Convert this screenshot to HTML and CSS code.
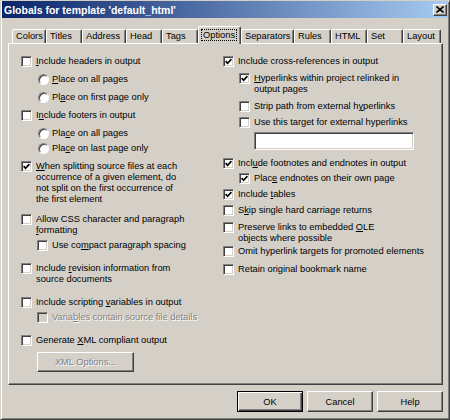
FILE: index.html
```html
<!DOCTYPE html>
<html lang="en">
<head>
    <meta charset="UTF-8">
    <title>Globals for template 'default_html'</title>
    <link rel="stylesheet" href="styles.css">
</head>
<body>

    <div class="window">
        <!-- Title Bar -->
        <div class="title-bar">
            <span class="title">Globals for template 'default_html'</span>
            <span class="close-btn">
                <svg width="8" height="7" viewBox="0 0 8 7"><path d="M0.5 0.5 L7.5 6.5 M7.5 0.5 L0.5 6.5" stroke="#000" stroke-width="1.6"/></svg>
            </span>
        </div>

        <!-- Tab Strip -->
        <div class="tabs">
            <div class="tab">Colors</div>
            <div class="tab">Titles</div>
            <div class="tab">Address</div>
            <div class="tab">Head</div>
            <div class="tab">Tags</div>
            <div class="tab selected"><span class="focus">Options</span></div>
            <div class="tab">Separators</div>
            <div class="tab">Rules</div>
            <div class="tab">HTML</div>
            <div class="tab">Set</div>
            <div class="tab">Layout</div>
        </div>

        <!-- Options Panel -->
        <div class="panel">
            <div class="col col-left">
                <div class="row first">
                    <span class="box"></span>
                    <span class="text"><u>I</u>nclude headers in output</span>
                </div>
                <div class="row sub">
                    <span class="radio"></span>
                    <span class="text"><u>P</u>lace on all pages</span>
                </div>
                <div class="row sub">
                    <span class="radio"></span>
                    <span class="text">Pl<u>a</u>ce on first page only</span>
                </div>
                <div class="row">
                    <span class="box"></span>
                    <span class="text">I<u>n</u>clude footers in output</span>
                </div>
                <div class="row sub">
                    <span class="radio"></span>
                    <span class="text">Pla<u>c</u>e on all pages</span>
                </div>
                <div class="row sub tight">
                    <span class="radio"></span>
                    <span class="text">Pla<u>c</u>e on last page only</span>
                </div>
                <div class="row">
                    <span class="box checked"><svg width="7" height="7" viewBox="0 0 7 7"><path d="M0.6 3.2 L2.6 5.3 L6.4 1.2" fill="none" stroke="#000" stroke-width="1.7"/></svg></span>
                    <span class="text"><u>W</u>hen splitting source files at each<br>occurrence of a given element, do<br>not split on the first occurrence of<br>the first element</span>
                </div>
                <div class="row mid">
                    <span class="box"></span>
                    <span class="text">Allow CSS character and paragraph<br><u>f</u>ormatting</span>
                </div>
                <div class="row sub tight">
                    <span class="box"></span>
                    <span class="text">Use co<u>m</u>pact paragraph spacing</span>
                </div>
                <div class="row loose">
                    <span class="box"></span>
                    <span class="text">Include <u>r</u>evision information from<br>source documents</span>
                </div>
                <div class="row loose">
                    <span class="box"></span>
                    <span class="text">Include scripting <u>v</u>ariables in output</span>
                </div>
                <div class="row sub tight disabled">
                    <span class="box"></span>
                    <span class="text">Varia<u>b</u>les contain source file details</span>
                </div>
                <div class="row loose">
                    <span class="box"></span>
                    <span class="text">Generate <u>X</u>ML compliant output</span>
                </div>
                <button class="btn btn-disabled xml-btn">XML Options...</button>
            </div>

            <div class="col col-right">
                <div class="row first">
                    <span class="box checked"><svg width="7" height="7" viewBox="0 0 7 7"><path d="M0.6 3.2 L2.6 5.3 L6.4 1.2" fill="none" stroke="#000" stroke-width="1.7"/></svg></span>
                    <span class="text">Include cross-references in output</span>
                </div>
                <div class="row sub wide">
                    <span class="box checked"><svg width="7" height="7" viewBox="0 0 7 7"><path d="M0.6 3.2 L2.6 5.3 L6.4 1.2" fill="none" stroke="#000" stroke-width="1.7"/></svg></span>
                    <span class="text"><u>H</u>yperlinks within project relinked in<br>output pages</span>
                </div>
                <div class="row sub wide">
                    <span class="box"></span>
                    <span class="text">Strip path from external h<u>y</u>perlinks</span>
                </div>
                <div class="row sub">
                    <span class="box"></span>
                    <span class="text">Use this target for external hyperlinks</span>
                </div>
                <div class="target-input"></div>
                <div class="row">
                    <span class="box checked"><svg width="7" height="7" viewBox="0 0 7 7"><path d="M0.6 3.2 L2.6 5.3 L6.4 1.2" fill="none" stroke="#000" stroke-width="1.7"/></svg></span>
                    <span class="text">Incl<u>u</u>de footnotes and endnotes in output</span>
                </div>
                <div class="row sub tight">
                    <span class="box checked"><svg width="7" height="7" viewBox="0 0 7 7"><path d="M0.6 3.2 L2.6 5.3 L6.4 1.2" fill="none" stroke="#000" stroke-width="1.7"/></svg></span>
                    <span class="text">Plac<u>e</u> endnotes on their own page</span>
                </div>
                <div class="row">
                    <span class="box checked"><svg width="7" height="7" viewBox="0 0 7 7"><path d="M0.6 3.2 L2.6 5.3 L6.4 1.2" fill="none" stroke="#000" stroke-width="1.7"/></svg></span>
                    <span class="text">Include <u>t</u>ables</span>
                </div>
                <div class="row">
                    <span class="box"></span>
                    <span class="text">S<u>k</u>ip single hard carriage returns</span>
                </div>
                <div class="row wide">
                    <span class="box"></span>
                    <span class="text">Preserve links to embedded <u>O</u>LE<br>objects where possible</span>
                </div>
                <div class="row snug">
                    <span class="box"></span>
                    <span class="text">Omit hyperlink targets for promoted elements</span>
                </div>
                <div class="row spaced">
                    <span class="box"></span>
                    <span class="text">Retain original bookmark name</span>
                </div>
            </div>
        </div>

        <!-- Dialog Buttons -->
        <div class="buttons">
            <button class="btn btn-default">OK</button>
            <button class="btn">Cancel</button>
            <button class="btn">Help</button>
        </div>
    </div>

</body>
</html>
```

FILE: styles.css
```css
/* Global Styles */
body {
    margin: 0;
    font-family: "Liberation Sans", Arial, sans-serif;
    font-size: 9.3px;
    color: #000;
    background-color: #d4d0c8;
}

u {
    text-decoration-thickness: 1px;
    text-underline-offset: 1px;
}

/* Dialog Window */
.window {
    width: 450px;
    height: 420px;
    box-sizing: border-box;
    background-color: #d4d0c8;
    border: 1px solid;
    border-color: #d4d0c8 #404040 #404040 #d4d0c8;
    box-shadow: inset 1px 1px #fff, inset -1px -1px #808080;
    padding: 0 1px 1px 1px;
    display: flex;
    flex-direction: column;
}

/* Title Bar */
.title-bar {
    height: 17px;
    flex-shrink: 0;
    background: linear-gradient(to right, #0a246a, #a6caf0);
    display: flex;
    align-items: center;
    justify-content: space-between;
    padding: 0 1px 0 2px;
}

.title {
    color: #fff;
    font-weight: bold;
    font-size: 10.5px;
}

.close-btn {
    width: 14px;
    height: 12px;
    box-sizing: border-box;
    background-color: #d4d0c8;
    border: 1px solid;
    border-color: #fff #404040 #404040 #fff;
    box-shadow: inset -1px -1px #808080;
    display: flex;
    align-items: center;
    justify-content: center;
}

.close-btn svg {
    display: block;
    margin: 0 1px 1px 0;
}

/* Tab Strip */
.tabs {
    display: flex;
    align-items: flex-end;
    height: 17px;
    margin: 8px 0 0 10px;
    position: relative;
    z-index: 1;
}

.tab {
    height: 14px;
    box-sizing: border-box;
    border: 1px solid;
    border-color: #fff #404040 transparent #fff;
    border-bottom: none;
    border-radius: 2px 2px 0 0;
    box-shadow: inset -1px 0 #808080;
    padding: 1px 0 0 3px;
    line-height: 11px;
    white-space: nowrap;
    background-color: #d4d0c8;
}

.tab:nth-child(1) { width: 34px; }
.tab:nth-child(2) { width: 36px; }
.tab:nth-child(3) { width: 44px; }
.tab:nth-child(4) { width: 36px; }
.tab:nth-child(5) { width: 36px; }
.tab:nth-child(6) { width: 43px; }
.tab:nth-child(7) { width: 53px; }
.tab:nth-child(8) { width: 37px; }
.tab:nth-child(9) { width: 36px; }
.tab:nth-child(10) { width: 36px; }
.tab:nth-child(11) { width: 38px; }

.tab.selected {
    height: 18px;
    margin-bottom: -1px;
    padding: 3px 0 0 3px;
}

.focus {
    outline: 1px dotted #000;
    outline-offset: 0;
    padding: 0 1px;
}

/* Options Panel */
.panel {
    width: 435px;
    height: 342px;
    box-sizing: border-box;
    flex-shrink: 0;
    margin-left: 6px;
    border: 1px solid;
    border-color: #fff #404040 #404040 #fff;
    box-shadow: inset -1px -1px #808080;
    padding: 12px 0 0 12px;
    display: flex;
}

.col {
    display: flex;
    flex-direction: column;
    align-items: flex-start;
}

.col-left {
    width: 202px;
}

.row {
    display: flex;
    align-items: flex-start;
    margin-top: 7px;
    line-height: 11px;
}

.row.tight { margin-top: 4px; }
.row.mid { margin-top: 9px; }
.row.loose { margin-top: 12px; }

/* right column sits a little closer together */
.col-right .row { margin-top: 5px; }
.col-right .row.tight { margin-top: 4px; }
.col-right .row.wide { margin-top: 6px; }
.col-right .row.snug { margin-top: 2px; }
.col-right .row.spaced { margin-top: 7px; }

.row.first,
.col-right .row.first { margin-top: 0; }

.row.sub {
    margin-left: 16px;
}

.col-left .row.sub .radio {
    margin-left: 1px;
    margin-right: -1px;
}

.text {
    margin-left: 4px;
    white-space: nowrap;
}

/* Check boxes and radios */
.box,
.radio {
    width: 11px;
    height: 11px;
    box-sizing: border-box;
    flex-shrink: 0;
    background-color: #fff;
    border: 1px solid;
    border-color: #808080 #fff #fff #808080;
    box-shadow: inset 1px 1px #404040, inset -1px -1px #d4d0c8;
    display: flex;
    align-items: center;
    justify-content: center;
}

.radio {
    border-radius: 50%;
    box-shadow: inset 1px 1px #404040;
}

.box svg {
    display: block;
}

.row.disabled .box {
    background-color: #d4d0c8;
}

.row.disabled .text {
    color: #808080;
    text-shadow: 1px 1px #fff;
}

/* Text field */
.target-input {
    width: 160px;
    height: 18px;
    box-sizing: border-box;
    margin: 4px 0 3px 31px;
    background-color: #fff;
    border: 1px solid;
    border-color: #808080 #fff #fff #808080;
    box-shadow: inset 1px 1px #404040, inset -1px -1px #d4d0c8;
}

/* Buttons */
.btn {
    width: 66px;
    height: 21px;
    box-sizing: border-box;
    font-family: inherit;
    font-size: 9.3px;
    color: #000;
    background-color: #d4d0c8;
    border: 1px solid;
    border-color: #fff #404040 #404040 #fff;
    box-shadow: inset -1px -1px #808080;
    padding: 0;
    cursor: default;
}

.btn-default {
    border-color: #000;
    box-shadow: inset 1px 1px #fff, inset -1px -1px #404040, inset -2px -2px #808080;
}

.btn-disabled {
    color: #808080;
    text-shadow: 1px 1px #fff;
}

.xml-btn {
    width: 97px;
    height: 20px;
    margin: 6px 0 0 16px;
}

.buttons {
    display: flex;
    justify-content: flex-end;
    gap: 4px;
    margin: 6px 5px 0 0;
}
```
